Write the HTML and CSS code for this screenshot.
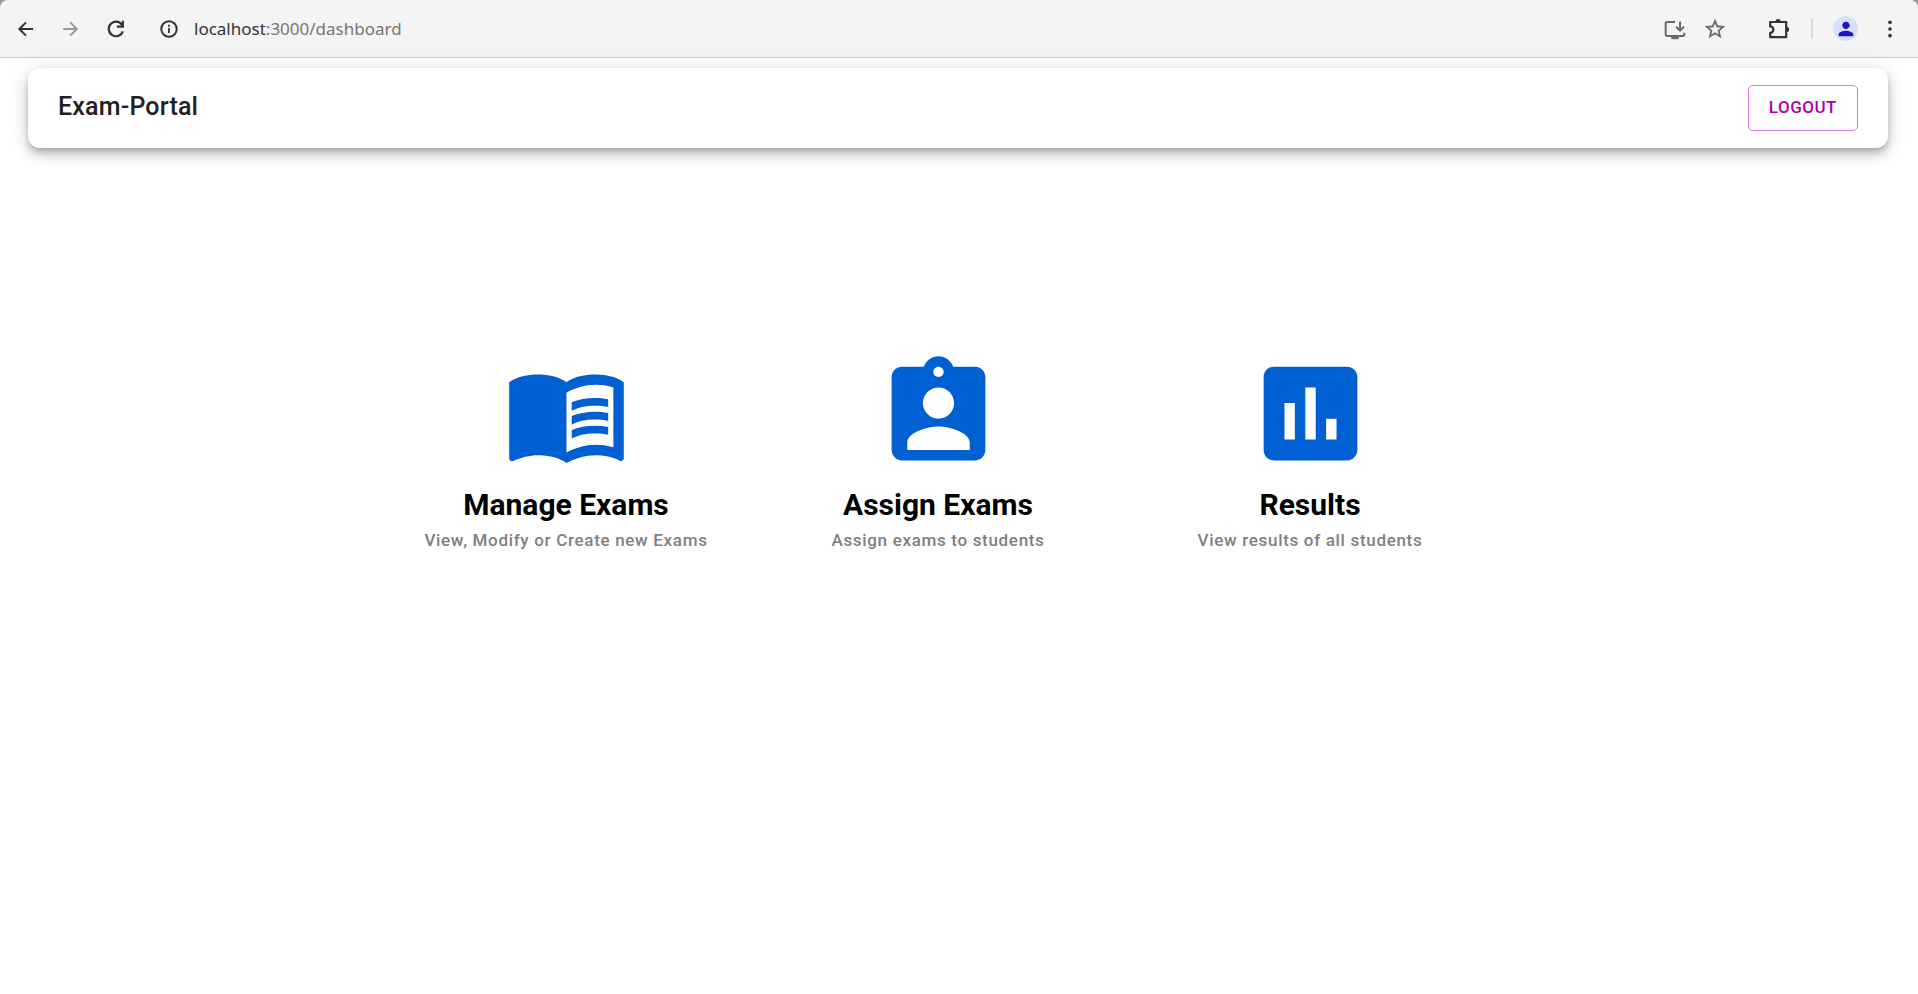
FILE: index.html
```html
<!DOCTYPE html>
<html lang="en">
<head>
<meta charset="utf-8">
<title>Exam-Portal</title>
<link rel="stylesheet" href="styles.css">
</head>
<body>
<div class="browser">
<div class="toolbar">
  <div class="nav">
    <button class="tool" aria-label="Back"><svg viewBox="0 0 24 24"><path d="M20.500 12H4.500M12 4 4 12l8 8" fill="none" stroke="currentColor" stroke-width="2.400"/></svg></button>
    <button class="tool faded" aria-label="Forward"><svg viewBox="0 0 24 24"><path d="M2.500 12h16M11 4l8 8-8 8" fill="none" stroke="currentColor" stroke-width="2.400"/></svg></button>
    <button class="tool" aria-label="Reload"><svg viewBox="1 1 22 22"><path d="M19.600 14.500A8 8 0 1 1 18.500 7.200l1.500 2" fill="none" stroke="currentColor" stroke-width="2.400"/><path d="M20.800 3v7.500H13V8.200h5.500V3z" fill="currentColor"/></svg></button>
  </div>
  <div class="location">
    <button class="tool" aria-label="Site information"><svg viewBox="1 1 22 22"><circle cx="12" cy="12" r="8.500" fill="none" stroke="currentColor" stroke-width="2.200"/><path d="M11 10.800h2V16.500h-2zM11 7.300h2v2.200h-2z" fill="currentColor"/></svg></button>
    <span class="url"><span class="host">localhost</span>:3000/dashboard</span>
  </div>
  <div class="actions">
    <div class="page-actions">
      <button class="tool large grey" aria-label="Install"><svg viewBox="-1 -2 26 26"><path d="M12 3.500H3.500a1.600 1.600 0 0 0-1.600 1.600v12a1.600 1.600 0 0 0 1.600 1.600h17a1.600 1.600 0 0 0 1.600-1.600V15" fill="none" stroke="currentColor" stroke-width="2.200"/><path d="M8 18.500h8V22H8z" fill="currentColor"/><path d="M17.500 3v9M13.200 8.500l4.300 4.300 4.300-4.300" fill="none" stroke="currentColor" stroke-width="2.200"/></svg></button>
      <button class="tool large grey" aria-label="Bookmark"><svg viewBox="0 0 24 24"><path d="m22 9.240-7.190-.62L12 2 9.190 8.630 2 9.240l5.460 4.730L5.820 21 12 17.270 18.180 21l-1.630-7.030zM12 15.400l-3.760 2.270 1-4.280-3.320-2.880 4.380-.38L12 6.100l1.710 4.040 4.380.38-3.320 2.880 1 4.280z" fill="currentColor" stroke="currentColor" stroke-width=".3"/></svg></button>
    </div>
    <button class="tool large" aria-label="Extensions"><svg viewBox="0 0 24 24"><path d="M3.200 5h16v15.200h-16v-4.400a3.200 3.200 0 0 0 0-6.400z" fill="none" stroke="currentColor" stroke-width="2.200" stroke-linejoin="round"/><path d="M8.500 4.500a2.600 2.600 0 0 1 5.200 0zM19.500 9.800a2.600 2.600 0 0 1 0 5.200z" fill="currentColor"/></svg></button>
    <span class="divider"></span>
    <button class="avatar" aria-label="Profile"><svg viewBox="0 0 24 24"><path d="M12 12c2.210 0 4-1.790 4-4s-1.790-4-4-4-4 1.790-4 4 1.790 4 4 4m0 2c-2.670 0-8 1.340-8 4v2h16v-2c0-2.660-5.330-4-8-4" fill="currentColor"/></svg></button>
    <button class="tool" aria-label="Menu"><svg viewBox="0 0 24 24"><g fill="currentColor"><circle cx="12" cy="4" r="2.200"/><circle cx="12" cy="12" r="2.200"/><circle cx="12" cy="20" r="2.200"/></g></svg></button>
  </div>
</div>
</div>
<header class="appbar">
  <h1 class="brand">Exam-Portal</h1>
  <button class="logout">LOGOUT</button>
</header>
<main class="menu">
  <a class="item" href="#manage">
    <svg class="icon" viewBox="0 0 24 24" aria-hidden="true"><path d="M21 5c-1.110-.35-2.330-.5-3.500-.5-1.950 0-4.050.4-5.500 1.500-1.450-1.100-3.550-1.500-5.500-1.500S2.450 4.900 1 6v14.650c0 .25.25.5.5.5.1 0 .15-.05.25-.05C3.100 20.450 5.050 20 6.500 20c1.950 0 4.050.4 5.500 1.500 1.350-.85 3.800-1.500 5.500-1.500 1.650 0 3.350.3 4.750 1.050.1.050.15.050.25.050.25 0 .5-.25.5-.5V6c-.6-.45-1.250-.75-2-1m0 13.500c-1.100-.35-2.300-.5-3.500-.5-1.700 0-4.150.65-5.500 1.500V8c1.350-.85 3.800-1.500 5.500-1.500 1.200 0 2.400.15 3.500.5z"/><path d="M17.500 10.500c.88 0 1.730.09 2.500.26V9.240c-.79-.15-1.640-.24-2.500-.24-1.700 0-3.240.29-4.500.83v1.660c1.130-.64 2.700-.99 4.500-.99M13 12.490v1.660c1.130-.64 2.700-.99 4.500-.99.88 0 1.730.09 2.500.26V11.900c-.79-.15-1.640-.24-2.500-.24-1.700 0-3.240.3-4.500.83m4.500 1.840c-1.700 0-3.240.29-4.500.83v1.660c1.130-.64 2.700-.99 4.500-.99.88 0 1.730.09 2.500.26v-1.520c-.79-.16-1.640-.24-2.500-.24"/></svg>
    <h2 class="title">Manage Exams</h2>
    <p class="text">View, Modify or Create new Exams</p>
  </a>
  <a class="item" href="#assign">
    <svg class="icon" viewBox="0 0 24 24" aria-hidden="true"><path d="M19 3h-4.180C14.400 1.840 13.300 1 12 1s-2.400.84-2.820 2H5c-1.100 0-2 .9-2 2v14c0 1.100.9 2 2 2h14c1.100 0 2-.9 2-2V5c0-1.100-.9-2-2-2m-7 0c.55 0 1 .45 1 1s-.45 1-1 1-1-.45-1-1 .45-1 1-1m0 4c1.660 0 3 1.340 3 3s-1.340 3-3 3-3-1.340-3-3 1.340-3 3-3m6 12H6v-1.400c0-2 4-3.100 6-3.100s6 1.100 6 3.100z"/></svg>
    <h2 class="title">Assign Exams</h2>
    <p class="text">Assign exams to students</p>
  </a>
  <a class="item" href="#results">
    <svg class="icon" viewBox="0 0 24 24" aria-hidden="true"><path d="M19 3H5c-1.100 0-2 .9-2 2v14c0 1.100.9 2 2 2h14c1.100 0 2-.9 2-2V5c0-1.100-.9-2-2-2M9 17H7v-7h2zm4 0h-2V7h2zm4 0h-2v-4h2z"/></svg>
    <h2 class="title">Results</h2>
    <p class="text">View results of all students</p>
  </a>
</main>
</body>
</html>
```
FILE: styles.css
```css
* { box-sizing: border-box; }
body { margin: 0; background: #fff; font-family: Roboto, "Liberation Sans", sans-serif; }
button { font: inherit; border: 0; padding: 0; background: none; cursor: pointer; }
h1, h2, p { margin: 0; }

.browser { background: #999; }
.toolbar { display: flex; align-items: center; height: 58px; padding: 0 18px 0 16px; background: #f4f4f4; border-bottom: 1px solid #c8c8c8; border-radius: 8px 8px 0 0; }
.nav { display: flex; gap: 25px; }
.tool { display: flex; width: 20px; height: 20px; color: #333; }
.tool svg { width: 100%; height: 100%; }
.large { width: 24px; height: 24px; }
.faded { color: #999; }
.grey { color: #6b6b6b; }
.location { display: flex; align-items: center; flex: 1; gap: 15px; margin-left: 33px; }
.url { font: 17px/24px "Noto Sans", sans-serif; color: #757575; }
.host { color: #333; }
.actions { display: flex; align-items: center; gap: 20px; }
.page-actions { display: flex; gap: 16px; margin-right: 20px; }
.divider { width: 2px; height: 20px; background: #dadada; }
.avatar { display: flex; align-items: center; justify-content: center; width: 25px; height: 25px; margin-right: 2px; border-radius: 50%; background: #d3e3fd; color: #2010c8; }
.avatar svg { width: 22px; height: 22px; }

.appbar { display: flex; align-items: center; justify-content: space-between; height: 80px; margin: 10px 30px 0 28px; padding: 0 30px; border-radius: 12px; background: #fff; box-shadow: 0 4px 6px -1px rgba(0, 0, 0, .2), 0 8px 12px rgba(0, 0, 0, .14), 0 1px 22px rgba(0, 0, 0, .12); }
.brand { padding-bottom: 2px; font-size: 25px; line-height: 40px; font-weight: 500; letter-spacing: .0075em; color: #212121; }
.logout { height: 46px; padding: 0 20px 2px; border: 1px solid #d67ad6; border-radius: 5px; font-size: 17px; line-height: 30px; font-weight: 500; letter-spacing: .03em; color: #aa00aa; }

.menu { display: grid; grid-template-columns: repeat(3, 372px); justify-content: center; margin: 203px 42px 0 0; }
.item { display: flex; flex-direction: column; align-items: center; color: #000; text-decoration: none; }
.icon { width: 125px; height: 125px; fill: #0060d2; }
.title { margin-top: 10px; font-size: 30px; line-height: 38px; font-weight: 700; }
.text { margin-top: 4px; font-size: 17px; line-height: 24px; font-weight: 500; letter-spacing: .04em; color: #808080; }
```
